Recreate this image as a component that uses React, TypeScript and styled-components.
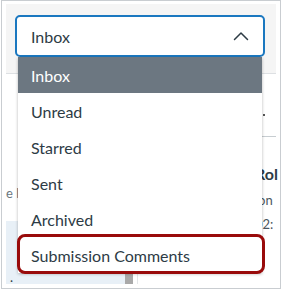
import React from "react";
import styled, { createGlobalStyle, css } from "styled-components";

const Global = createGlobalStyle`
  html, body { margin: 0; padding: 0; background: #fff; }
  body { width: 283px; height: 291px; overflow: hidden; font-family: Lato, "Noto Sans", sans-serif; color: #2d3b45; }
`;

const Page = styled.div`
  position: relative;
  width: 283px;
  height: 291px;
`;

const Frame = styled.div`
  margin-left: 1px;
  width: 280px;
  height: 289px;
  box-sizing: border-box;
  border: 1px solid #c9cdd1;
  padding: 3px 4px 4px 4px;
  overflow: hidden;
`;

const Screen = styled.div`
  display: flex;
  flex-direction: column;
  height: 100%;
`;

const Header = styled.div`
  height: 71px;
  box-sizing: border-box;
  background: #f5f5f5;
  border-bottom: 1px solid #dde0e3;
  padding: 11px 0 0 9px;
`;

const Select = styled.div`
  width: 250px;
  height: 42px;
  box-sizing: border-box;
  border: 2px solid #1b78c0;
  border-radius: 5px;
  background: #fff;
  display: flex;
  align-items: center;
  justify-content: space-between;
  padding: 0 14px 0 14px;
  font-size: 16px;
`;

const Body = styled.div`
  flex: 1;
  display: flex;
`;

const ListPane = styled.div`
  width: 119px;
  display: flex;
  flex-direction: column;
`;

const Spacer = styled.div<{ $h: number }>`
  height: ${(p) => p.$h}px;
`;

const Snippet = styled.div`
  height: 38px;
  font-size: 13px;
  color: #6b7780;
  display: flex;
  align-items: center;
  white-space: nowrap;
`;

const SelectedRow = styled.div`
  flex: 1;
  background: #e8f0f7;
  font-size: 13px;
  padding: 50px 0 0 4px;
  line-height: 1;
`;

const ScrollCol = styled.div`
  width: 8px;
  display: flex;
  flex-direction: column;
  justify-content: flex-end;
`;

const Thumb = styled.div`
  height: 11px;
  background: #a9a9a9;
`;

const Gutter = styled.div`
  width: 4px;
  border-right: 1px solid #e3e6e8;
`;

const DetailPane = styled.div`
  flex: 1;
  min-width: 0;
  display: flex;
  flex-direction: column;
`;

const DetailTop = styled.div`
  height: 63px;
  box-sizing: border-box;
  border-bottom: 1px solid #c7cdd1;
  padding: 40px 0 0 125px;
`;

const Dot = styled.div`
  width: 2px;
  height: 2px;
  background: #555;
`;

const DetailText = styled.div<{ $bold?: boolean; $top: number }>`
  padding-left: 117px;
  margin-top: ${(p) => p.$top}px;
  white-space: nowrap;
  ${(p) =>
    p.$bold
      ? css`
          font-size: 16px;
          font-weight: 700;
        `
      : css`
          font-size: 13px;
          color: #4a5660;
        `}
`;

const Menu = styled.div`
  position: absolute;
  left: 18px;
  top: 57px;
  width: 244px;
  background: #fff;
  box-shadow: 0 1px 3px rgba(0, 0, 0, 0.28);
`;

const Item = styled.div<{ $active?: boolean; $marked?: boolean }>`
  position: relative;
  height: 36px;
  display: flex;
  align-items: center;
  padding-left: 13px;
  font-size: 16px;
  background: ${(p) => (p.$active ? "#6c7781" : "#fff")};
  color: ${(p) => (p.$active ? "#fff" : "#2d3b45")};
  ${(p) =>
    p.$marked &&
    css`
      &::after {
        content: "";
        position: absolute;
        top: -3px;
        left: -1px;
        right: -3px;
        bottom: -1px;
        border: 3px solid #990b0b;
        border-radius: 8px;
      }
    `}
`;

const Chevron = () => (
  <svg width="16" height="10" viewBox="0 0 16 10" fill="none">
    <polyline points="1.5,8.5 8,2 14.5,8.5" stroke="#2d3b45" strokeWidth="1.5" strokeLinecap="round" strokeLinejoin="round" />
  </svg>
);

const items = ["Inbox", "Unread", "Starred", "Sent", "Archived", "Submission Comments"];

export default function App() {
  return (
    <Page>
      <Global />
      <Frame>
        <Screen>
          <Header>
            <Select>
              <span>Inbox</span>
              <Chevron />
            </Select>
          </Header>
          <Body>
            <ListPane>
              <Spacer $h={100} />
              <Snippet>e l</Snippet>
              <Spacer $h={9} />
              <SelectedRow>.</SelectedRow>
            </ListPane>
            <ScrollCol>
              <Thumb />
            </ScrollCol>
            <Gutter />
            <DetailPane>
              <DetailTop>
                <Dot />
              </DetailTop>
              <DetailText $bold $top={27}>Rol</DetailText>
              <DetailText $top={9}>ion</DetailText>
              <DetailText $top={8}>02:</DetailText>
            </DetailPane>
          </Body>
        </Screen>
      </Frame>
      <Menu>
        {items.map((label, i) => (
          <Item key={label} $active={i === 0} $marked={i === items.length - 1}>
            {label}
          </Item>
        ))}
      </Menu>
    </Page>
  );
}
